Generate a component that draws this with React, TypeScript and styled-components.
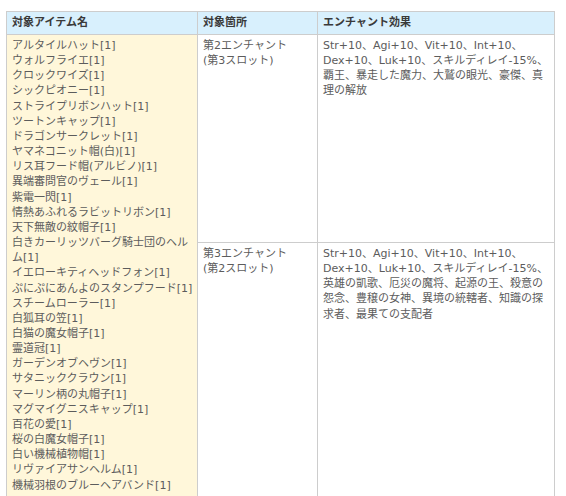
import React from "react";
import styled, { createGlobalStyle } from "styled-components";

const Global = createGlobalStyle`
  html, body { margin: 0; padding: 0; background: #fff; }
  body { font-family: "DejaVu Sans", "Noto Sans CJK JP", sans-serif; }
`;

const Table = styled.div`
  display: grid;
  grid-template-columns: 190px 119px 236px;
  grid-template-rows: 22px 207px auto;
  gap: 1px;
  background: #cdcdcd;
  border: 1px solid #cdcdcd;
  width: max-content;
  margin: 11px 0 0 6px;
  font-size: 11px;
  line-height: 15.15px;
`;

const HeadCell = styled.div`
  background: #d8f0fd;
  color: #3a3a3a;
  font-weight: bold;
  padding: 0 5px;
  display: flex;
  align-items: center;
`;

const ItemCell = styled.div`
  background: #fff7da;
  color: #5c5c5c;
  padding: 3px 3px 3px 5px;
  grid-row: 2 / span 2;
`;

const Cell = styled.div`
  background: #fff;
  color: #5c5c5c;
  padding: 3px 3px 3px 5px;
`;

const Line = styled.div``;

const items = [
  "アルタイルハット[1]",
  "ウォルフライエ[1]",
  "クロックワイズ[1]",
  "シックピオニー[1]",
  "ストライプリボンハット[1]",
  "ツートンキャップ[1]",
  "ドラゴンサークレット[1]",
  "ヤマネコニット帽(白)[1]",
  "リス耳フード帽(アルビノ)[1]",
  "異端審問官のヴェール[1]",
  "紫電一閃[1]",
  "情熱あふれるラビットリボン[1]",
  "天下無敵の紋帽子[1]",
  "白きカーリッツバーグ騎士団のヘルム[1]",
  "イエローキティヘッドフォン[1]",
  "ぷにぷにあんよのスタンプフード[1]",
  "スチームローラー[1]",
  "白狐耳の笠[1]",
  "白猫の魔女帽子[1]",
  "霊道冠[1]",
  "ガーデンオブヘヴン[1]",
  "サタニッククラウン[1]",
  "マーリン柄の丸帽子[1]",
  "マグマイグニスキャップ[1]",
  "百花の愛[1]",
  "桜の白魔女帽子[1]",
  "白い機械植物帽[1]",
  "リヴァイアサンヘルム[1]",
  "機械羽根のブルーヘアバンド[1]",
];

export default function App() {
  return (
    <>
      <Global />
      <Table>
        <HeadCell>対象アイテム名</HeadCell>
        <HeadCell>対象箇所</HeadCell>
        <HeadCell>エンチャント効果</HeadCell>
        <ItemCell>
          {items.map((t) => (
            <Line key={t}>{t}</Line>
          ))}
        </ItemCell>
        <Cell>
          第2エンチャント
          <br />
          (第3スロット)
        </Cell>
        <Cell>
          Str+10、Agi+10、Vit+10、Int+10、Dex+10、Luk+10、スキルディレイ-15%、覇王、暴走した魔力、大鷲の眼光、豪傑、真理の解放
        </Cell>
        <Cell>
          第3エンチャント
          <br />
          (第2スロット)
        </Cell>
        <Cell>
          Str+10、Agi+10、Vit+10、Int+10、Dex+10、Luk+10、スキルディレイ-15%、英雄の凱歌、厄災の魔将、起源の王、殺意の怨念、豊穣の女神、異境の統轄者、知識の探求者、最果ての支配者
        </Cell>
      </Table>
    </>
  );
}
